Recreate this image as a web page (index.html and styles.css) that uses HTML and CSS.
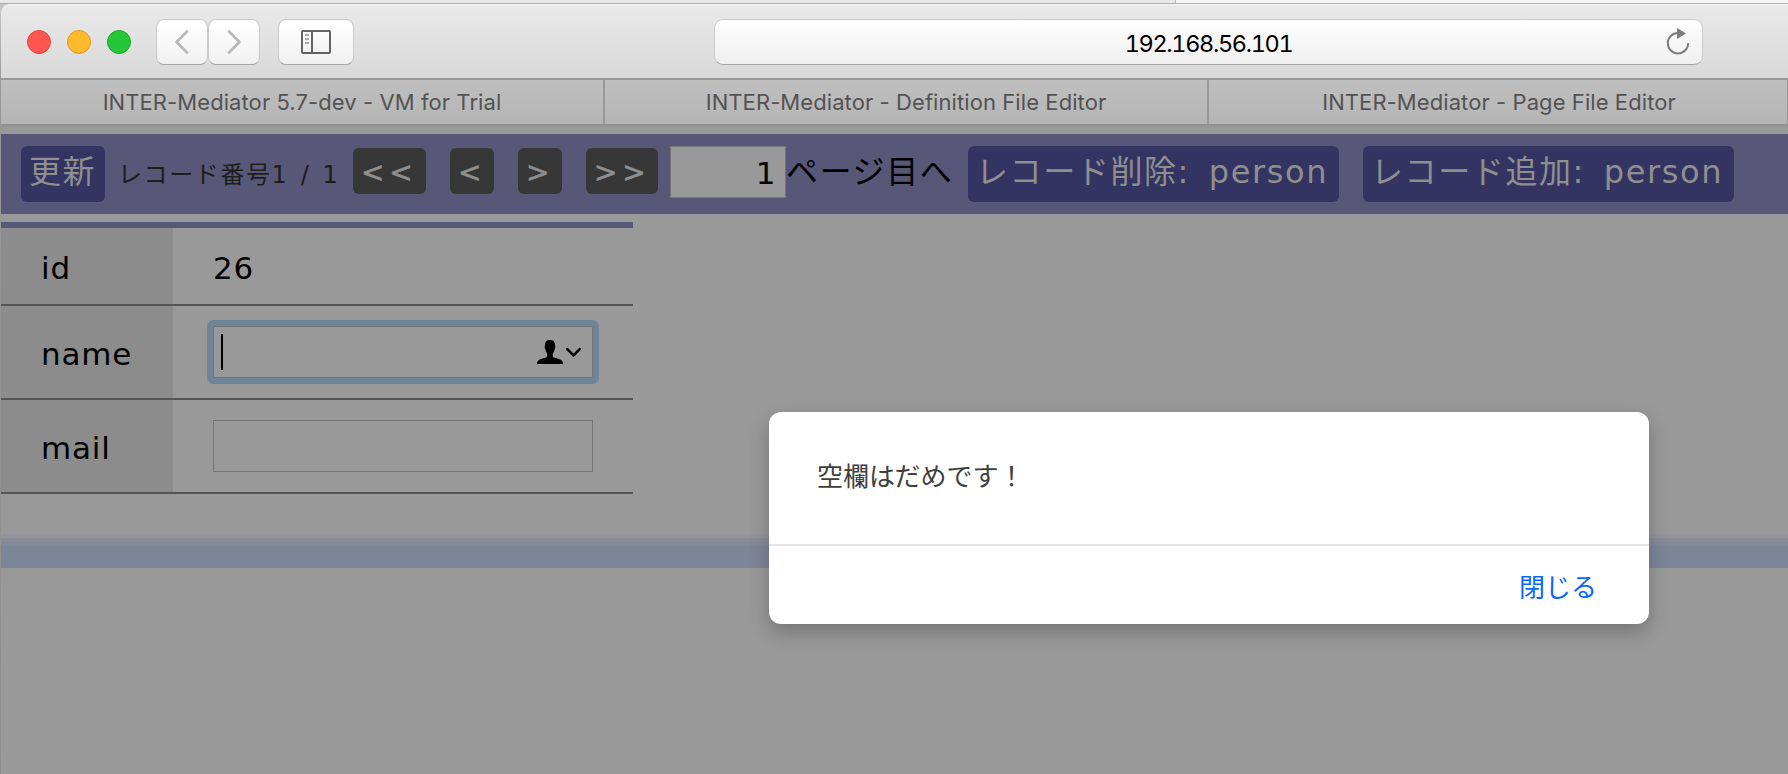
FILE: index.html
```html
<!DOCTYPE html>
<html lang="ja">
<head>
<meta charset="utf-8">
<title>INTER-Mediator</title>
<link rel="stylesheet" href="styles.css">
</head>
<body>
<div class="behind"><div class="behind-left"></div><div class="behind-right"></div></div>
<div class="window">
  <header class="toolbar">
    <div class="lights"><i class="light red"></i><i class="light yellow"></i><i class="light green"></i></div>
    <div class="history">
      <button class="tool"><svg width="50" height="44" viewBox="0 0 50 44"><path d="M30 11.500 19.500 22 30 32.500" fill="none" stroke="#b9b9b9" stroke-width="2.600" stroke-linecap="round" stroke-linejoin="round"/></svg></button>
      <button class="tool"><svg width="50" height="44" viewBox="0 0 50 44"><path d="M20 11.500 30.500 22 20 32.500" fill="none" stroke="#b9b9b9" stroke-width="2.600" stroke-linecap="round" stroke-linejoin="round"/></svg></button>
    </div>
    <button class="tool sidebar"><svg width="30" height="24" viewBox="0 0 30 24"><rect x="1" y="1" width="28" height="22" rx="1" fill="none" stroke="#636363" stroke-width="2"/><path d="M11 1v22" stroke="#636363" stroke-width="2"/><path d="M4 5h4M4 9h4M4 13h4" stroke="#8d8d8d" stroke-width="1.700"/></svg></button>
    <div class="address"><span class="url">192.168.56.101</span>
      <svg class="reload" width="24" height="28" viewBox="0 0 24 28"><path d="M12 5A10.200 10.200 0 1 0 22.200 15" fill="none" stroke="#7d7d7d" stroke-width="2"/><path d="M11 0 20 5.500 11 11z" fill="#7d7d7d"/></svg>
    </div>
  </header>
  <nav class="tabs">
    <div class="tab">INTER-Mediator 5.7-dev - VM for Trial</div>
    <div class="tab">INTER-Mediator - Definition File Editor</div>
    <div class="tab">INTER-Mediator - Page File Editor</div>
  </nav>
  <main class="page">
    <div class="navigator">
      <button class="action refresh">更新</button>
      <span class="counter">レコード番号1 / 1</span>
      <button class="step wide">&lt;&lt;</button>
      <button class="step">&lt;</button>
      <button class="step">&gt;</button>
      <button class="step wide last">&gt;&gt;</button>
      <div class="jump">1</div>
      <span class="jump-label">ページ目へ</span>
      <button class="action record">レコード削除: person</button>
      <button class="action record">レコード追加: person</button>
    </div>
    <div class="form">
      <div class="row first"><div class="label">id</div><div class="value">26</div></div>
      <div class="row"><div class="label">name</div><div class="value">
        <div class="field focused"><span class="caret"></span>
          <svg width="46" height="26" viewBox="0 0 46 26"><path d="M13 1c3.500 0 5.200 2 5 5.500.600 1 .3 3.300-.500 4-.3 2-.900 3-1.700 3.900v2.800c0 1.500 3.200 1.700 6.200 2.800 2.800 1 4 2.600 4 5H0c0-2.400 1.200-4 4-5 3-1.100 6.200-1.300 6.200-2.800v-2.800C9.400 13.500 8.800 12.500 8.500 10.500c-.8-.7-1.100-3-.5-4C7.800 3 9.500 1 13 1z"/><path d="M30.300 10.200 36.500 16.400 42.700 10.200" fill="none" stroke="#000" stroke-width="2.600" stroke-linecap="round"/></svg>
        </div></div></div>
      <div class="row"><div class="label">mail</div><div class="value"><div class="field"></div></div></div>
    </div>
    <div class="band"></div>
  </main>
</div>
<div class="dialog">
  <div class="message">空欄はだめです！</div>
  <div class="footer"><button class="close">閉じる</button></div>
</div>
</body>
</html>
```
FILE: styles.css
```css
* { box-sizing: border-box; }
body {
  margin: 0;
  width: 1788px;
  height: 774px;
  overflow: hidden;
  background: linear-gradient(#c9c9c9 0, #999 80px, #8c8c8c 100%);
  font-family: "DejaVu Sans", "Noto Sans CJK JP", sans-serif;
}
button { margin: 0; padding: 0; border: 0; font: inherit; letter-spacing: inherit; word-spacing: inherit; }
.behind { display: flex; height: 4px; border-bottom: 1px solid #b0b0b0; }
.behind-left { width: 1176px; background: #e8e8e8; border-right: 1px solid #bbb; }
.behind-right { flex: 1; background: #f5f5f5; }
.window { margin-left: 1px; height: 770px; border-radius: 8px 0 0 0; overflow: hidden; background: #999; }

.toolbar {
  display: flex;
  height: 76px;
  padding: 15px 0 0 26px;
  border-bottom: 2px solid #999;
  background: linear-gradient(#f5f5f5 0, #e9e9e9 2px, #d9d9d9 100%);
}
.lights { display: flex; gap: 16px; padding-top: 11px; width: 129px; }
.light { width: 24px; height: 24px; border-radius: 50%; border: 1px solid; }
.red { background: #ff564f; border-color: #e2463f; }
.yellow { background: #ffb92c; border-color: #e09a1f; }
.green { background: #25c638; border-color: #1aa82a; }
.history { display: flex; }
.tool {
  display: flex;
  align-items: center;
  justify-content: center;
  width: 52px;
  height: 46px;
  border: 1px solid #cacaca;
  border-bottom-color: #a5a5a5;
  border-radius: 8px;
  background: linear-gradient(#fff, #f1f1f1);
}
.sidebar { width: 76px; margin-left: 18px; }
.address {
  display: flex;
  width: 989px;
  height: 46px;
  margin-left: 360px;
  padding-right: 12px;
  border: 1px solid #cacaca;
  border-bottom-color: #a5a5a5;
  border-radius: 9px;
  background: linear-gradient(#fff, #f9f9f9 30%, #f0f0f0);
  align-items: center;
}
.url { flex: 1; padding: 3px 0 0 36px; text-align: center; font: 23.500px/44px Inter, sans-serif; font-feature-settings: "tnum"; letter-spacing: -1.35px; }

.tabs { display: flex; height: 46px; border-bottom: 2px solid #919191; background: linear-gradient(#bfbfbf, #b5b5b5); }
.tab {
  width: 604px;
  border-right: 2px solid #999;
  color: #535353;
  text-align: center;
  font: 22px/45px Inter, sans-serif;
  letter-spacing: 0.08px;
}
.tab:last-child { width: 579px; border-right-width: 1px; padding-left: 2px; }

.page { padding-top: 8px; }
.navigator {
  display: flex;
  align-items: flex-start;
  height: 80px;
  padding: 12px 0 0 20px;
  background: #575777;
  font-size: 32px;
  letter-spacing: 1.6px;
  white-space: nowrap;
}
.action { height: 56px; border-radius: 6px; background: #343462; color: #8f8f8f; line-height: 52px; padding-bottom: 4px; text-align: left; }
.refresh { width: 84px; padding-left: 8px; }
.record { width: 371px; padding-left: 8px; margin-right: 24px; word-spacing: 7px; }
.counter { width: 235px; margin-left: 13px; font-size: 24px; line-height: 58px; color: #1d1d1d; word-spacing: 3px; }
.step { width: 44px; height: 46px; margin: 2px 24px 0 0; border-radius: 6px; background: #373737; color: #8f8f8f; font-size: 28px; line-height: 46px; letter-spacing: 4.8px; padding: 2px 0 0 8px; text-align: left; -webkit-text-stroke: 0.5px #8f8f8f; }
.step.wide { width: 73px; }
.step.last { width: 72px; margin-right: 12px; }
.jump { width: 116px; height: 52px; padding-right: 8px; border: 1px solid #757575; background: #999; text-align: right; line-height: 53px; font-size: 31px; }
.jump-label { width: 182px; line-height: 52px; }

.form { width: 632px; margin-top: 8px; border-top: 6px solid #575777; font-size: 31px; letter-spacing: 0.8px; }
.row { display: flex; height: 94px; border-bottom: 2px solid #555; }
.row.first { height: 78px; }
.label { width: 172px; padding: 4px 0 0 40px; background: #8c8c8c; display: flex; align-items: center; }
.value { display: flex; align-items: center; padding-left: 40px; }
.first .value { padding-top: 4px; }
.field { width: 380px; height: 52px; border: 1px solid #757575; background: #999; }
.focused { display: flex; align-items: center; justify-content: space-between; padding: 0 9px 0 7px; outline: 6px solid #708499; border-radius: 0.5px; }
.caret { width: 2px; height: 36px; background: #000; }
.band { height: 34px; margin-top: 40px; background: linear-gradient(#929299 0 4px, #8a8d98 4px 8px, #848998 8px 12px, #7d8598 12px); }

.dialog {
  position: absolute;
  left: 769px;
  top: 412px;
  width: 880px;
  height: 212px;
  border-radius: 12px;
  background: #fff;
  box-shadow: 0 8px 20px rgba(0, 0, 0, 0.24);
  font-family: "Noto Sans CJK JP", sans-serif;
}
.message { height: 134px; padding: 43px 0 0 48px; border-bottom: 2px solid #e5e5e5; font-size: 26px; line-height: 40px; color: #3f3f3f; }
.footer { display: flex; justify-content: flex-end; padding: 18px 52px 0 0; }
.close { background: none; color: #0a66ff; font-size: 26px; line-height: 44px; }
```
